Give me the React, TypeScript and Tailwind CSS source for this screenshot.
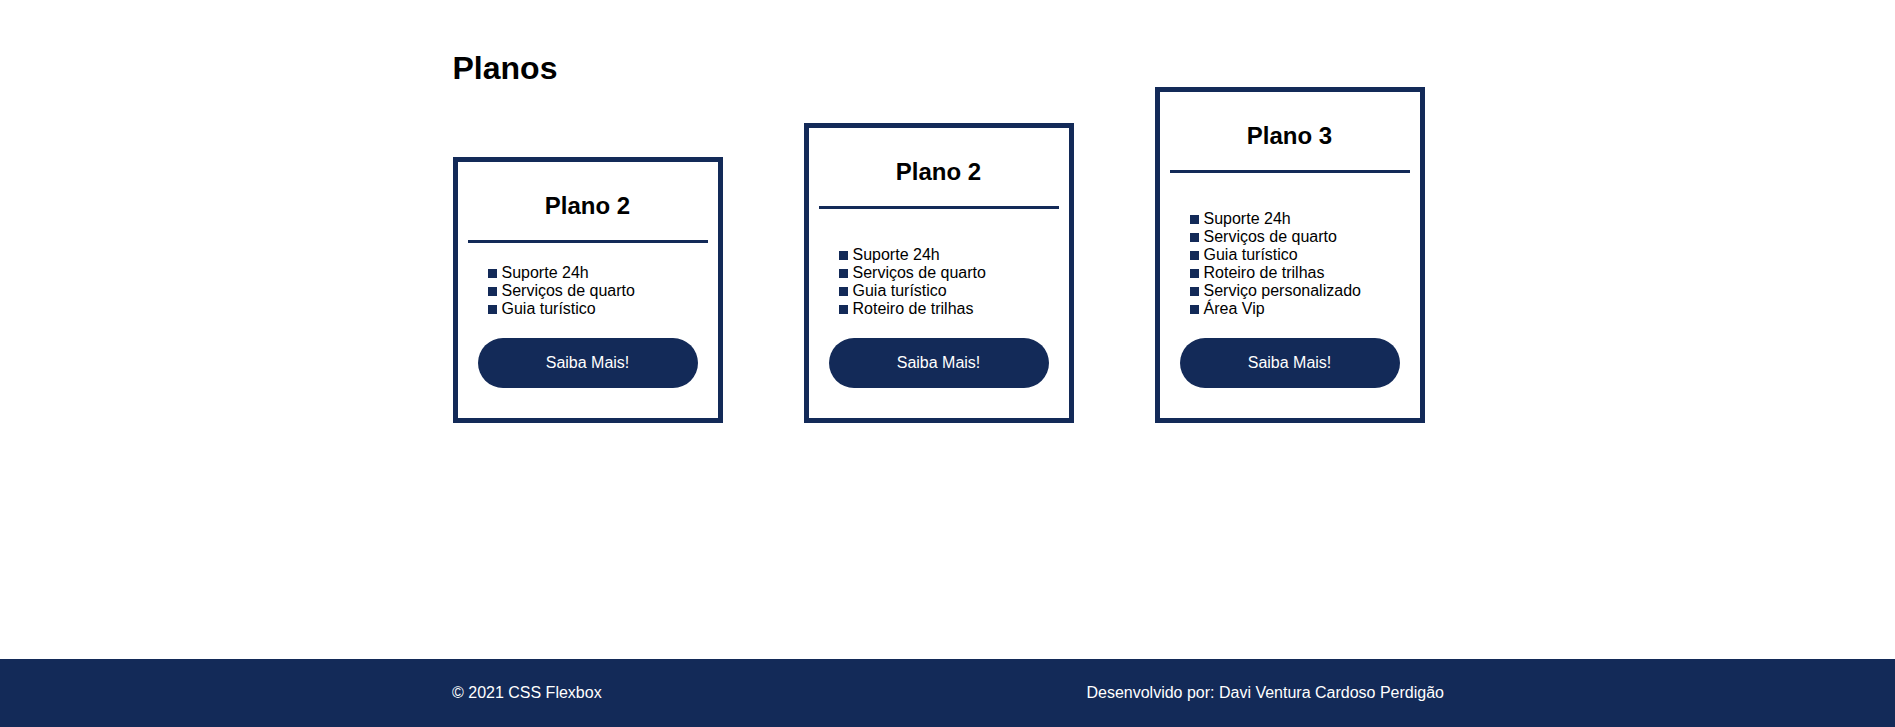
import React from "react";

type Plan = { title: string; items: string[]; listTop: string };

const plans: Plan[] = [
  { title: "Plano 2", items: ["Suporte 24h", "Serviços de quarto", "Guia turístico"], listTop: "mt-[21px]" },
  {
    title: "Plano 2",
    items: ["Suporte 24h", "Serviços de quarto", "Guia turístico", "Roteiro de trilhas"],
    listTop: "mt-[37px]",
  },
  {
    title: "Plano 3",
    items: [
      "Suporte 24h",
      "Serviços de quarto",
      "Guia turístico",
      "Roteiro de trilhas",
      "Serviço personalizado",
      "Área Vip",
    ],
    listTop: "mt-[37px]",
  },
];

function Card({ plan }: { plan: Plan }) {
  return (
    <div className="w-[270px] border-[5px] border-[#132a58] bg-white px-[10px] pt-[30px] pb-[30px] flex flex-col">
      <h2 className="text-[24px] leading-[28px] font-bold text-black text-center">{plan.title}</h2>
      <div className="mt-[20px] h-[3px] bg-[#132a58]" />
      <ul className={`${plan.listTop} pl-[20px] text-[16px] leading-[18px] text-black`}>
        {plan.items.map((it, i) => (
          <li key={i} className="flex items-baseline">
            <span className="inline-block w-[9px] h-[9px] bg-[#132a58] mr-[5px] shrink-0" />
            <span>{it}</span>
          </li>
        ))}
      </ul>
      <button className="mt-[20px] mx-auto w-[220px] h-[50px] rounded-full bg-[#132a58] text-white text-[16px] flex items-center justify-center">
        Saiba Mais!
      </button>
    </div>
  );
}

export default function App() {
  return (
    <div
      className="min-h-screen flex flex-col bg-white"
      style={{ fontFamily: '"Liberation Sans", Arial, sans-serif' }}
    >
      <main className="flex-1">
        <div className="w-[990px] mx-auto pt-[50px]">
          <h1 className="text-[32px] leading-[37px] font-bold text-black">Planos</h1>
          <div className="flex items-end gap-[81px]">
            {plans.map((p, i) => (
              <Card key={i} plan={p} />
            ))}
          </div>
        </div>
      </main>
      <footer className="h-[68px] bg-[#132a58] shrink-0">
        <div className="w-[993px] mx-auto h-full flex items-center justify-between text-white text-[16px]">
          <span className="pl-[1px]">© 2021 CSS Flexbox</span>
          <span>Desenvolvido por: Davi Ventura Cardoso Perdigão</span>
        </div>
      </footer>
    </div>
  );
}
